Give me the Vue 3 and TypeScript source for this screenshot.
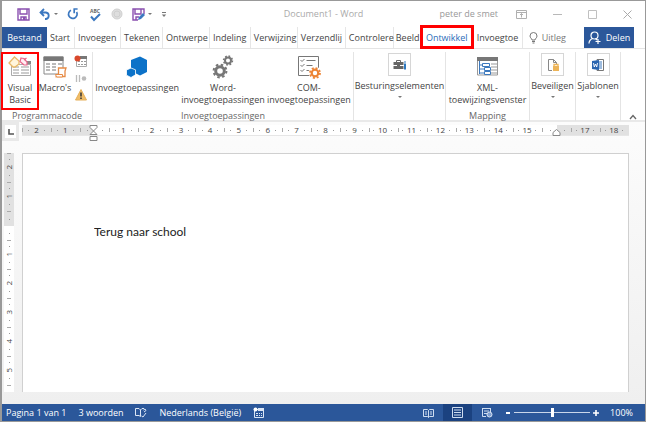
<script setup lang="ts">
import { ref } from 'vue'

interface Tab {
  label: string
  weight: number
  kind?: 'file' | 'plain'
}

const tabs: Tab[] = [
  { label: 'Bestand', weight: 45, kind: 'file' },
  { label: 'Start', weight: 28 },
  { label: 'Invoegen', weight: 46 },
  { label: 'Tekenen', weight: 42 },
  { label: 'Ontwerpe', weight: 47 },
  { label: 'Indeling', weight: 41 },
  { label: 'Verwijzing', weight: 47 },
  { label: 'Verzendlij', weight: 48 },
  { label: 'Controlere', weight: 48 },
  { label: 'Beeld', weight: 26, kind: 'plain' },
  { label: 'Ontwikkel', weight: 54 },
  { label: 'Invoegtoe', weight: 49 },
]
const tabColumns = tabs.map((t) => `minmax(0, ${t.weight}fr)`).join(' ')

const active = ref('Ontwikkel')
const documentText = ref('Terug naar school')
const zoom = ref(100)

const rulerMarks = Array.from({ length: 21 }, (_, i) => {
  const n = i - 2
  return n === 0 || n === 16 ? '' : String(Math.abs(n))
})
const sideMarks = ['2', '1', '', '1', '2', '3', '4', '5', '']
</script>

<template>
  <div class="window">
    <header class="titlebar">
      <div class="quick">
        <button aria-label="Opslaan">
          <svg width="13" height="13" viewBox="0 0 13 13"><path d="M1 1h11v11H1zM3 1v5h7V1M4 12V9h5v3" fill="none" stroke="#8a50b0" stroke-width="1.4" /><path d="M6 9h2v3H6z" fill="#8a50b0" /></svg>
        </button>
        <button aria-label="Ongedaan maken" class="with-caret">
          <svg width="12" height="12" viewBox="0 0 12 12"><path d="M5 1 1.5 4.5 5 8M2 4.5h5a3.3 3.3 0 0 1 0 6.5H6" fill="none" stroke="#3c78c0" stroke-width="1.8" /></svg>
          <i class="caret"></i>
        </button>
        <button aria-label="Opnieuw">
          <svg width="12" height="12" viewBox="0 0 12 12"><path d="M4 2.2A4.3 4.3 0 1 0 9.6 4M6.4 1h4.2M7.2 1v4.2" fill="none" stroke="#3c78c0" stroke-width="1.7" /></svg>
        </button>
        <button aria-label="Spelling">
          <svg width="14" height="15" viewBox="0 0 14 15"><text x="7" y="6" text-anchor="middle" font-size="5" font-weight="bold" fill="#666">ABC</text><path d="m3 9.5 3 3.5 6-6" fill="none" stroke="#3c78c0" stroke-width="2" /></svg>
        </button>
        <button aria-label="Opnemen">
          <svg width="12" height="12" viewBox="0 0 12 12"><circle cx="6" cy="6" r="5" fill="#dedede" stroke="#d0d0d0" /><circle cx="6" cy="6" r="3" fill="none" stroke="#cfcfcf" /></svg>
        </button>
        <button aria-label="Opslaan als" class="with-caret">
          <svg width="13" height="13" viewBox="0 0 13 13"><path d="M6 12H1V1h11v5M3 1v5h6V1M4 12V9h3" fill="none" stroke="#8a50b0" stroke-width="1.4" /><path d="m6 12 1-3 4-4 2 2-4 4z" fill="#3c78c0" /></svg>
          <i class="caret"></i>
        </button>
        <button aria-label="Werkbalk aanpassen">
          <svg width="6" height="7" viewBox="0 0 6 7"><path d="M1 1.5h4" stroke="#777" /><path d="M.8 3.5h4.4L3 6z" fill="#777" /></svg>
        </button>
      </div>
      <h1 class="caption">Document1 - Word</h1>
      <div class="controls">
        <span>peter de smet</span>
        <button aria-label="Weergaveopties voor lint">
          <svg width="11" height="9" viewBox="0 0 11 9"><path d="M.5.5h10v8H.5zM.5 2.5h10M5.5 7.5v-4M4 5l1.5-1.5L7 5" fill="none" stroke="#b0b0b0" /></svg>
        </button>
        <button aria-label="Minimaliseren"><svg width="9" height="9" viewBox="0 0 9 9"><path d="M0 4.5h9" stroke="#b8b8b8" /></svg></button>
        <button aria-label="Maximaliseren"><svg width="9" height="9" viewBox="0 0 9 9"><path d="M.5.5h8v8h-8z" fill="none" stroke="#c0c0c0" /></svg></button>
        <button aria-label="Sluiten"><svg width="9" height="9" viewBox="0 0 9 9"><path d="m.5.5 8 8m0-8-8 8" stroke="#aaa" /></svg></button>
      </div>
    </header>

    <div class="tabbar">
      <nav class="tabs" :style="{ gridTemplateColumns: tabColumns }">
        <button
          v-for="t in tabs"
          :key="t.label"
          class="tab"
          :class="[t.kind, { active: active === t.label }]"
          @click="active = t.label"
        >
          {{ t.label }}
        </button>
      </nav>
      <button class="tell">
        <svg width="9" height="12" viewBox="0 0 9 12"><path d="M3 8C3 6.500 1 6 1 4a3.500 3.500 0 0 1 7 0c0 2-2 2.500-2 4zM3 9.500h3M3.500 11h2" fill="none" stroke="#777" /></svg>
        Uitleg
      </button>
      <button class="share">
        <svg width="13" height="13" viewBox="0 0 13 13"><circle cx="6.500" cy="4.500" r="3.500" fill="none" stroke="#fff" stroke-width="1.200" /><path d="M1 12.500c0-3 1.500-4 3.500-5M7.500 7.500l1.500 1.500M10 8v5M7.500 10.500h5" fill="none" stroke="#fff" stroke-width="1.200" /></svg>
        Delen
      </button>
    </div>

    <main class="ribbon">
      <section class="group code">
        <div class="commands">
          <button class="command highlighted">
            <svg width="24" height="22" viewBox="0 0 24 22"><path d="M3.500 8.500h19v11h-19z" fill="#fff" stroke="#aaa" /><path d="M15 5h8v3h-8z" fill="#888" /><path d="M5 11h6M13 11h8M5 14h6M13 14h8M5 17h6M13 17h8" stroke="#999" /><path d="m6.500 1 4.500 4v3l-4 3H5L1 7z" fill="#fff5dc" stroke="#e8b968" stroke-width="1.300" /><path d="m13 2 3 .5L19 6v3h-3l-4-3.500zM18.500 2 16 4" fill="#ffeef3" stroke="#e9648a" stroke-width="1.200" /></svg>
            <span>Visual<br />Basic</span>
          </button>
          <button class="command">
            <svg width="24" height="22" viewBox="0 0 24 22"><path d="M1 1h19v17H1z" fill="#fff" stroke="#888" /><path d="M.5.5h20V5H.5z" fill="#777" /><path d="M3 8h4M9 8h4M15 8h4M3 11h4M9 11h4M3 14h4M9 14h4" stroke="#777" stroke-width="1.200" /><path d="M15.500 12h7.500l-1 3v5.500h-8.500l2-2z" fill="#fff" stroke="#e68a45" stroke-width="1.300" /><path d="M12.500 18.500h7v2.500h-6z" fill="#fff" stroke="#e68a45" /></svg>
            <span>Macro's</span>
          </button>
          <div class="minis">
            <button aria-label="Macro opnemen"><svg width="13" height="13" viewBox="0 0 13 13"><path d="M2.500 2.500h10v9h-10z" fill="#fff" stroke="#aaa" /><path d="M6 1h7v3H6z" fill="#777" /><path d="M4 6.500h2M7 6.500h2M10 6.500h2M4 9.500h2M7 9.500h2M10 9.500h2" stroke="#999" /><circle cx="3.500" cy="3.500" r="3" fill="#d9482b" /></svg></button>
            <button aria-label="Opname onderbreken"><svg width="12" height="9" viewBox="0 0 12 9"><path d="M1.500 1v7M4.500 1v7" stroke="#bbb" stroke-width="1.300" /><circle cx="9" cy="4.500" r="2.300" fill="#bbb" /></svg></button>
            <button aria-label="Macrobeveiliging"><svg width="12" height="12" viewBox="0 0 12 12"><path d="M6 .5 11.500 11H.5z" fill="#f0bd68" stroke="#e6b05a" stroke-linejoin="round" /><path d="M6 3.500v4M6 8.500V10" stroke="#333" stroke-width="1.500" /></svg></button>
          </div>
        </div>
        <h2>Programmacode</h2>
      </section>

      <section class="group addins">
        <div class="commands">
          <button class="command">
            <svg width="24" height="22" viewBox="0 0 24 22"><path d="M6 4 15 .5 22 4v12l-7 3.500L6 15z" fill="#0c72c8" /><path d="M1.500 14 6 12l4.500 1.800v5L6 21.500l-4.500-2.300z" fill="#0c72c8" stroke="#fff" stroke-width=".8" /></svg>
            <span>Invoegtoepassingen</span>
          </button>
          <button class="command">
            <svg width="24" height="24" viewBox="0 0 24 24" fill="none" stroke="#777"><circle cx="9" cy="16" r="4.300" stroke-width="3" /><circle cx="9" cy="16" r="6.400" stroke-width="2" stroke-dasharray="2.500 2.526" /><circle cx="17" cy="5.500" r="3" stroke-width="2" /><circle cx="17" cy="5.500" r="4.400" stroke-width="1.600" stroke-dasharray="1.700 1.756" /></svg>
            <span>Word-<br />invoegtoepassingen</span>
          </button>
          <button class="command">
            <svg width="24" height="24" viewBox="0 0 24 24" fill="none"><path d="M1.500 1.500h20v19h-20z" fill="#fff" stroke="#777" /><path d="m3.500 5 1.500 1.500L7.500 4M3.500 10 5 11.500 7.500 9M3.500 15 5 16.500 7.500 14M9.500 5.500h9M9.500 10.500h6M9.500 15.500h3" stroke="#777" /><circle cx="18" cy="18" r="6.500" fill="#fff" /><circle cx="18" cy="18" r="3.300" stroke="#ed8435" stroke-width="2.200" /><circle cx="18" cy="18" r="5" stroke="#ed8435" stroke-width="1.800" stroke-dasharray="2 1.927" /></svg>
            <span>COM-<br />invoegtoepassingen</span>
          </button>
        </div>
        <h2>Invoegtoepassingen</h2>
      </section>

      <section class="group menu">
        <button class="command">
          <span class="tile"><svg width="14" height="14" viewBox="0 0 14 14"><path d="M3.500 4V2.500h4V4" fill="none" stroke="#666" /><path d="M.5 4h10v7H.5z" fill="#666" /><path d="M0 7.500h4M7 7.500h4" stroke="#fff" /><path d="M12 6v5.500" stroke="#2e79c0" stroke-width="2" /><path d="M12 3v3" stroke="#2e79c0" /></svg></span>
          <span>Besturingselementen</span><i class="caret"></i>
        </button>
      </section>

      <section class="group mapping">
        <div class="commands">
          <button class="command">
            <svg width="24" height="22" viewBox="0 0 24 22"><path d="M1.500 2h20v17h-20z" fill="#fff" stroke="#999" /><path d="M1 1h21v4H1z" fill="#777" /><path d="M15 8h7M15 11h7M15 14h7M15 17h7" stroke="#999" /><path d="M3.500 5v13M3.500 9H7M3.500 13H8M3.500 17H8" stroke="#3d79bd" fill="none" /><path d="M6.500 7.500h7v3h-7zM8.500 11.500h6v3h-6zM8.500 15.500h6v3h-6z" fill="#fff" stroke="#3d79bd" /></svg>
            <span>XML-<br />toewijzingsvenster</span>
          </button>
        </div>
        <h2>Mapping</h2>
      </section>

      <section class="group menu">
        <button class="command">
          <span class="tile"><svg width="14" height="14" viewBox="0 0 14 14"><path d="M6 12.500H2.500v-11h5l3 3V7M7.500 1.500v3h3" fill="#fff" stroke="#888" /><path d="M7 8h6v5H7z" fill="#ecb458" /><path d="M8 8V6.500h4V8" fill="none" stroke="#ecb458" stroke-width="1.300" /></svg></span>
          <span>Beveiligen</span><i class="caret"></i>
        </button>
      </section>

      <section class="group menu">
        <button class="command">
          <span class="tile"><svg width="14" height="14" viewBox="0 0 14 14"><path d="M6 1.500h6.500v11H6z" fill="#fff" stroke="#777" /><path d="M8 4h3M8 6h3M8 8h3M8 10h3" stroke="#3d79bd" /><path d="m1 3 7-1v10l-7-1z" fill="#2b65b0" /><path d="m2.500 5 .8 4L4.500 6l1.200 3 .8-4" fill="none" stroke="#fff" stroke-width=".9" /></svg></span>
          <span>Sjablonen</span><i class="caret"></i>
        </button>
      </section>

      <button class="collapse" aria-label="Lint samenvouwen">
        <svg width="8" height="6" viewBox="0 0 8 6"><path d="m1 5 3-3.500L7 5" fill="none" stroke="#666" stroke-width="1.300" /></svg>
      </button>
    </main>

    <div class="workspace">
      <button class="corner" aria-label="Tabstop"><svg width="6" height="6" viewBox="0 0 6 6"><path d="M1 0v5h5" fill="none" stroke="#555" stroke-width="1.600" /></svg></button>
      <div class="ruler">
        <span v-for="(m, i) in rulerMarks" :key="i" class="mark">
          <i class="tick"></i><i class="dot"></i><b>{{ m }}</b><i class="dot"></i>
          <svg v-if="i === 2" class="indent" width="9" height="17" viewBox="0 0 9 17"><path d="M1 .5h7v2L4.500 6 1 2.500zM4.500 6 8 9.500H1zM1 11.500h7v4H1z" fill="#fff" stroke="#888" /></svg>
          <svg v-if="i === 18" class="indent right" width="9" height="7" viewBox="0 0 9 7"><path d="M1 6.500v-3l3.500-3 3.500 3v3z" fill="#fff" stroke="#888" /></svg>
        </span>
      </div>
      <div class="side">
        <span v-for="(m, i) in sideMarks" :key="i" class="side-mark">
          <i class="tick"></i><i class="dot"></i><b>{{ m }}</b><i class="dot"></i>
        </span>
      </div>
      <div class="page">
        <textarea v-model="documentText" aria-label="Document" spellcheck="false"></textarea>
      </div>
    </div>

    <footer class="status">
      <button>Pagina 1 van 1</button>
      <button>3 woorden</button>
      <button aria-label="Taalcontrole"><svg width="12" height="11" viewBox="0 0 12 11"><path d="M5.500 9.500 4 8.500H.5v-7H4L5.500 3v6.500M5.500 3 7 1.500h2M6.500 9l1.500 1 3-4M8.500 3l1.500-1 1 1.500L9 5" fill="none" stroke="#dbe6f5" /></svg></button>
      <button>Nederlands (België)</button>
      <button aria-label="Macro opnemen"><svg width="11" height="11" viewBox="0 0 11 11"><path d="M1.500 2.500h9v8h-9z" fill="none" stroke="#dbe6f5" /><path d="M5 1h6v3H5z" fill="#dbe6f5" /><path d="M3 6.500h2M6 6.500h1M8 6.500h1M3 8.500h2M6 8.500h1M8 8.500h1" stroke="#dbe6f5" /><circle cx="2.500" cy="2.500" r="2" fill="#fff" /></svg></button>
      <div class="views">
        <button aria-label="Leesmodus"><svg width="11" height="10" viewBox="0 0 11 10"><path d="M.5 1.500h4l1 1 1-1h4v7h-4l-1 1-1-1h-4zM5.500 2.500v7M2 4h2M2 6h2M7 4h2M7 6h2" fill="none" stroke="#cfddf0" /></svg></button>
        <button aria-label="Afdrukweergave" class="current"><svg width="11" height="11" viewBox="0 0 11 11"><path d="M.5.5h10v10H.5zM2 3h7M2 5.500h7M2 8h7" fill="none" stroke="#cfddf0" /></svg></button>
        <button aria-label="Webweergave"><svg width="12" height="11" viewBox="0 0 12 11"><path d="M5 9.500H1.500v-8h8V5M1 1.500h9M3 4h5M3 6.500h3" fill="none" stroke="#cfddf0" /><circle cx="8.500" cy="7.500" r="2.500" fill="#7f9fd0" stroke="#dbe6f5" /></svg></button>
      </div>
      <div class="zoom">
        <button aria-label="Uitzoomen" @click="zoom -= 10"><svg width="6" height="8" viewBox="0 0 6 8"><path d="M1 4h4" stroke="#fff" stroke-width="2" /></svg></button>
        <input v-model.number="zoom" type="range" min="0" max="200" aria-label="Zoomniveau" />
        <button aria-label="Inzoomen" @click="zoom += 10"><svg width="6" height="8" viewBox="0 0 6 8"><path d="M0 4h6M3 1v6" stroke="#fff" stroke-width="1.600" /></svg></button>
        <output>{{ zoom }}%</output>
      </div>
    </footer>
  </div>
</template>

<style>
body {
  margin: 0;
}
</style>

<style scoped>
* {
  box-sizing: border-box;
}

.window {
  min-height: 100vh;
  display: flex;
  flex-direction: column;
  border: 1px solid #999;
  border-left-width: 2px;
  background: #fff;
  color: #444;
  font: 9px/12px "Open Sans", "Noto Sans", sans-serif;
}

button {
  display: flex;
  align-items: center;
  justify-content: center;
  margin: 0;
  padding: 0;
  border: 0;
  background: none;
  color: inherit;
  font: inherit;
  white-space: nowrap;
}

svg {
  display: block;
  flex: none;
}

h1,
h2 {
  margin: 0;
  font: inherit;
}

.caret {
  flex: none;
  border: 2px solid transparent;
  border-top-color: #777;
  border-bottom: 0;
}

.titlebar {
  display: grid;
  grid-template-columns: 1fr auto 1fr;
  align-items: center;
  height: 26px;
}

.quick {
  display: flex;
  align-items: center;
  gap: 9px;
  padding-left: 15px;
}

.with-caret {
  gap: 3px;
}

.caption {
  color: #aaa;
}

.controls {
  display: flex;
  align-items: center;
  justify-content: flex-end;
  gap: 26px;
  padding-right: 13px;
  color: #999;
}

.controls span {
  margin-right: -8px;
}

.tabbar {
  display: flex;
  height: 22px;
  padding-right: 11px;
  border-bottom: 1px solid #e4e4e4;
}

.tabs {
  flex: 1;
  display: grid;
  min-width: 0;
}

.tab {
  justify-content: flex-start;
  padding-left: 3px;
  border-right: 1px solid #e6e6e6;
}

.tab.file {
  justify-content: center;
  padding: 0;
  background: #2b579a;
  color: #fff;
  border: 0;
}

.tab.plain {
  border: 0;
  padding-left: 2px;
}

.tab.active {
  justify-content: center;
  margin: -2px 0 -1px;
  border: 3px solid #f00;
  padding: 2px 0 0;
  background: #fff;
  color: #2b6cb8;
}

.tell {
  gap: 4px;
  padding: 0 18px 0 6px;
  color: #777;
}

.share {
  gap: 5px;
  width: 50px;
  background: #2b579a;
  color: #fff;
}

.ribbon {
  display: grid;
  grid-template-columns: 91fr 261fr 92fr 84fr 46fr 45fr 24fr;
  height: 73px;
  border-bottom: 2px solid #e9e9e9;
}

.group {
  display: flex;
  flex-direction: column;
  min-width: 0;
  margin: 3px 0;
  border-right: 1px solid #e4e4e4;
}

.group h2 {
  text-align: center;
  color: #666;
  line-height: 11px;
}

.commands {
  flex: 1;
  display: flex;
  align-items: stretch;
}

.command {
  flex-direction: column;
  justify-content: flex-start;
  gap: 3px;
  padding-top: 3px;
}

.command > svg {
  height: 24px;
}

.code .command {
  width: 32px;
}

.code .highlighted {
  width: 38px;
  height: 58px;
  margin-left: -1px;
  padding-top: 1px;
  border: 2px solid #f00;
}

.minis {
  display: flex;
  flex-direction: column;
  align-items: center;
  gap: 6px;
  padding: 3px 0 0 3px;
}

.addins .commands {
  display: grid;
  grid-template-columns: 88fr 83fr 88fr;
}

.mapping .command {
  width: 100%;
}

.menu .command {
  gap: 4px;
  padding-top: 1px;
}

.tile {
  display: grid;
  place-items: center;
  width: 23px;
  height: 23px;
  border: 1px solid #d6d6d6;
}

.collapse {
  align-self: end;
  height: 14px;
}

.workspace {
  flex: 1;
  display: grid;
  grid-template-columns: 20px minmax(0, 1fr) 16px;
  grid-template-rows: 31px minmax(0, 1fr) 12px;
  background: linear-gradient(#fcfcfc, #efefef);
}

.corner {
  width: 17px;
  height: 19px;
  border: 3px solid #e9e9e9;
  background: #fff;
}

.ruler {
  display: grid;
  grid-template-columns: repeat(21, minmax(0, 1fr));
  height: 11px;
  margin-top: 3px;
  background: linear-gradient(90deg, #e1e1e1 11.9%, #fff 11.9% 88.1%, #e1e1e1 88.1%);
  border-bottom: 1px solid #e6e6e6;
}

.mark {
  position: relative;
  display: flex;
  align-items: center;
  justify-content: space-between;
  padding-right: 6px;
}

.mark b,
.side-mark b {
  font: 8px/10px "Open Sans", sans-serif;
}

.tick {
  width: 1px;
  height: 4px;
  background: #aaa;
}

.dot {
  width: 1px;
  height: 1px;
  background: #999;
}

.indent {
  position: absolute;
  top: 0;
  left: 50%;
  margin-left: -5px;
}

.indent.right {
  top: 4px;
}

.side {
  grid-column: 1;
  grid-row: 2;
  display: flex;
  flex-direction: column;
  height: 0;
  min-height: 100%;
  width: 10px;
  margin-left: 2px;
  overflow: hidden;
  background: linear-gradient(#e1e1e1 73px, #fff 73px);
}

.side-mark {
  flex: none;
  display: flex;
  flex-direction: column;
  align-items: center;
  justify-content: space-between;
  height: 29px;
  padding-bottom: 6px;
}

.side-mark .tick {
  width: 4px;
  height: 1px;
}

.side-mark b {
  writing-mode: vertical-rl;
  transform: rotate(180deg);
}

.page {
  grid-column: 2;
  grid-row: 2;
  display: flex;
  padding: 70px 71px 0;
  border: 1px solid #d0d0d0;
  border-bottom: 0;
  background: #fff;
}

textarea {
  flex: 1;
  min-width: 0;
  padding: 0;
  border: 0;
  outline: 0;
  resize: none;
  background: none;
  color: #222;
  font: 12px/16px Lato, sans-serif;
}

.status {
  display: flex;
  align-items: center;
  gap: 12px;
  height: 17px;
  padding: 0 12px 0 4px;
  background: #2b579a;
  color: #fff;
}

.views {
  display: flex;
  align-self: stretch;
  margin: 0 -8px 0 auto;
}

.views button {
  width: 29px;
}

.views .current {
  background: #1b4280;
}

.zoom {
  display: flex;
  align-items: center;
  gap: 3px;
}

.zoom output {
  margin-left: 8px;
}

input[type="range"] {
  appearance: none;
  width: 76px;
  height: 12px;
  margin: 0;
  background: linear-gradient(#c9d6ea, #c9d6ea) center / 100% 1px no-repeat;
}

input[type="range"]::-webkit-slider-thumb {
  appearance: none;
  width: 3px;
  height: 9px;
  background: #fff;
}
</style>
